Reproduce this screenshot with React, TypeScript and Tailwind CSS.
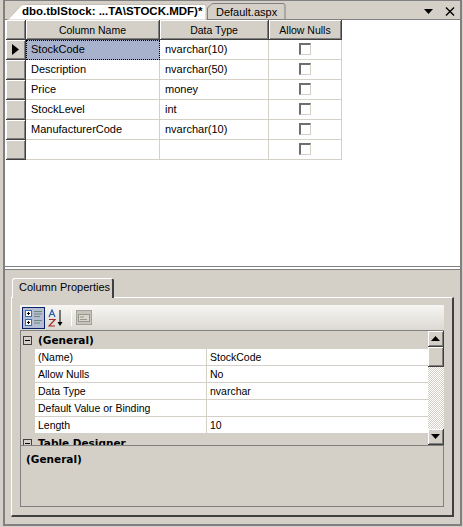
import React from "react";

const columns = [
  { name: "StockCode", type: "nvarchar(10)" },
  { name: "Description", type: "nvarchar(50)" },
  { name: "Price", type: "money" },
  { name: "StockLevel", type: "int" },
  { name: "ManufacturerCode", type: "nvarchar(10)" },
  { name: "", type: "" },
];

const props = [
  { label: "(Name)", value: "StockCode" },
  { label: "Allow Nulls", value: "No" },
  { label: "Data Type", value: "nvarchar" },
  { label: "Default Value or Binding", value: "" },
  { label: "Length", value: "10" },
];

const bevel =
  "bg-[#d4d0c8] border-r border-b border-[#404040] shadow-[inset_1px_1px_0_#ffffff,inset_-1px_-1px_0_#808080]";

const Check = () => (
  <div className="w-[12px] h-[12px] border-t-2 border-l-2 border-t-[#6e6e6e] border-l-[#6e6e6e] border-r border-b border-r-[#d4d0c8] border-b-[#d4d0c8] bg-white" />
);

const Minus = () => (
  <div className="w-[9px] h-[9px] border border-[#404040] flex items-center justify-center">
    <div className="w-[5px] h-px bg-black" />
  </div>
);

const Arrow = ({ down }: { down?: boolean }) => (
  <svg width="9" height="5" viewBox="0 0 9 5">
    <path d={down ? "M0 0H9L4.5 5Z" : "M0 5H9L4.5 0Z"} fill="#000" />
  </svg>
);

export default function App() {
  return (
    <div className="w-[463px] h-[527px] bg-[#d4d0c8] overflow-hidden text-[11px] leading-none text-black font-['Liberation_Sans',sans-serif]">
      <div className="ml-[3px] w-[459px] h-[526px] border-x-2 border-t border-b-2 border-[#808080] flex flex-col">
        {/* document tabs */}
        <div className="relative z-10 h-[18px] shrink-0 flex items-end pl-[2px]">
          <div className="relative w-[200px] h-[16px] -mb-px z-10">
            <svg className="absolute left-0 bottom-0" width="200" height="16" viewBox="0 0 200 16">
              <path d="M0.5 16L14 1.5Q15 0.5 17 0.5H197Q199 0.5 199 2.5V16Z" fill="#fff" stroke="#c4c0b8" />
            </svg>
            <span className="absolute left-[15px] top-[2px] font-bold text-[11.5px] whitespace-nowrap">
              dbo.tblStock: ...TA\STOCK.MDF)*
            </span>
          </div>
          <div className="relative w-[79px] h-[16px]">
            <svg className="absolute left-0 bottom-0" width="79" height="16" viewBox="0 0 79 16">
              <path d="M0.5 16V5L4 1.5Q5 0.5 7 0.5H76Q78 0.5 78 2.5V16" fill="#d4d0c8" stroke="#808080" />
            </svg>
            <span className="absolute left-[9px] top-[4px] whitespace-nowrap">Default.aspx</span>
          </div>
          <div className="absolute right-[5px] top-[6px] flex items-center gap-[12px]">
            <Arrow down />
            <svg width="10" height="9" viewBox="0 0 10 9">
              <path d="M1 0.5L9 8.5M9 0.5L1 8.5" stroke="#000" strokeWidth="1.4" fill="none" />
            </svg>
          </div>
        </div>

        {/* table columns */}
        <div className="h-[248px] shrink-0 bg-white border-t border-[#808080] border-b pl-px">
          <div className="grid grid-cols-[20px_134px_109px_73px] auto-rows-[20px]">
            <div className={bevel} />
            {["Column Name", "Data Type", "Allow Nulls"].map((h) => (
              <div key={h} className={`${bevel} flex items-center justify-center text-[10.5px] pt-px`}>
                {h}
              </div>
            ))}
            {columns.map((c, i) => (
              <React.Fragment key={i}>
                <div className={`${bevel} flex items-center justify-center`}>
                  {i === 0 && (
                    <svg width="7" height="11" viewBox="0 0 7 11">
                      <path d="M0 0L7 5.5L0 11Z" fill="#000" />
                    </svg>
                  )}
                </div>
                <div
                  className={
                    i === 0
                      ? "bg-[#a9b2cc] border border-dotted border-black flex items-center pl-[4px] pb-px"
                      : "border-r border-b border-[#d4d0c8] flex items-center pl-[5px] pb-px"
                  }
                >
                  {c.name}
                </div>
                <div className="border-r border-b border-[#d4d0c8] flex items-center pl-[5px] pb-px">{c.type}</div>
                <div className="border-r border-b border-[#d4d0c8] flex items-center justify-center pb-px">
                  <Check />
                </div>
              </React.Fragment>
            ))}
          </div>
        </div>

        {/* splitter */}
        <div className="h-[3px] shrink-0 border-t-2 border-white border-b border-b-[#808080]" />

        {/* column properties */}
        <div className="flex-1 px-[6px] pt-[8px] flex flex-col">
          <div className="relative z-10 w-[102px] h-[20px] -mb-px ml-px bg-[#d4d0c8] border-l border-t border-white border-r-2 border-r-[#404040] rounded-t-[3px] flex items-center pl-[6px] pb-[2px] whitespace-nowrap">
            Column Properties
          </div>
          <div className="h-[220px] border-t border-l border-white border-r-2 border-r-[#404040] border-b-2 border-b-[#404040] pl-[8px] pr-[8px] pt-[7px]">
            <div className="h-[25px] bg-gradient-to-b from-[#f7f6f3] to-[#dcd9d2] flex items-center pl-[2px] gap-[3px]">
              <div className="w-[23px] h-[22px] bg-[#b6bdd2] border border-[#0a246a] flex items-center justify-center">
                <svg width="18" height="18" viewBox="0 0 18 18">
                  <rect x="0.5" y="1.5" width="6" height="6" fill="#fff" stroke="#3a6ea5" />
                  <rect x="0.5" y="10.5" width="6" height="6" fill="#fff" stroke="#3a6ea5" />
                  <path d="M2 4.5H5M3.5 3V6M2 13.5H5M3.5 12V15" stroke="#000" />
                  <path d="M9 2.5H17M9 5H17M9 7.5H15M9 11.5H17M9 14H15" stroke="#6a8a7a" />
                </svg>
              </div>
              <svg width="17" height="18" viewBox="0 0 17 18">
                <path d="M1 8L4 1L7 8M2 5.5H6" stroke="#2a5cb0" fill="none" strokeWidth="1.2" />
                <path d="M1 10.5H7L1 17H7" stroke="#a02a2a" fill="none" strokeWidth="1.2" />
                <path d="M12 1V15" stroke="#000" />
                <path d="M9.5 13H14.5L12 17Z" fill="#000" />
              </svg>
              <div className="w-px h-[16px] bg-[#c8c4bc] ml-[3px] mr-[1px] border-r border-white" />
              <svg width="16" height="15" viewBox="0 0 16 15">
                <rect x="0.5" y="0.5" width="15" height="14" fill="#c6c3bb" stroke="#a5a29a" />
                <rect x="2.5" y="4.5" width="11" height="7" fill="#d9d6cf" stroke="#9a978f" />
                <path d="M4 7H8M4 9.5H11" stroke="#9a978f" />
              </svg>
            </div>

            <div className="h-[115px] border-t border-l border-[#808080] flex overflow-hidden">
              <div className="flex-1 min-w-0">
                <div className="h-[18px] flex items-center pl-[2px] gap-[6px]">
                  <Minus />
                  <span className="font-['DejaVu_Sans',sans-serif] font-bold text-[10.5px]">(General)</span>
                </div>
                {props.map((p) => (
                  <div key={p.label} className="h-[17px] ml-[14px] bg-white border-b border-[#d4d0c8] flex items-center text-[10.5px]">
                    <div className="w-[172px] h-full border-r border-[#d4d0c8] pl-[3px] flex items-center">{p.label}</div>
                    <div className="pl-[3px]">{p.value}</div>
                  </div>
                ))}
                <div className="h-[18px] flex items-center pl-[2px] gap-[6px]">
                  <Minus />
                  <span className="font-['DejaVu_Sans',sans-serif] font-bold text-[10.5px]">Table Designer</span>
                </div>
              </div>
              <div className="w-[16px] shrink-0 flex flex-col h-[114px] bg-[repeating-conic-gradient(#ffffff_0_25%,#d4d0c8_0_50%)] bg-size-[2px_2px]">
                <div className={`${bevel} h-[16px] shrink-0 flex items-center justify-center`}>
                  <Arrow />
                </div>
                <div className={`${bevel} h-[20px] shrink-0`} />
                <div className="flex-1" />
                <div className={`${bevel} h-[16px] shrink-0 flex items-center justify-center`}>
                  <Arrow down />
                </div>
              </div>
            </div>

            <div className="h-[62px] border border-[#808080] pl-[5px] pt-[8px]">
              <span className="font-['DejaVu_Sans',sans-serif] font-bold text-[10.5px]">(General)</span>
            </div>
          </div>
        </div>
      </div>
    </div>
  );
}
